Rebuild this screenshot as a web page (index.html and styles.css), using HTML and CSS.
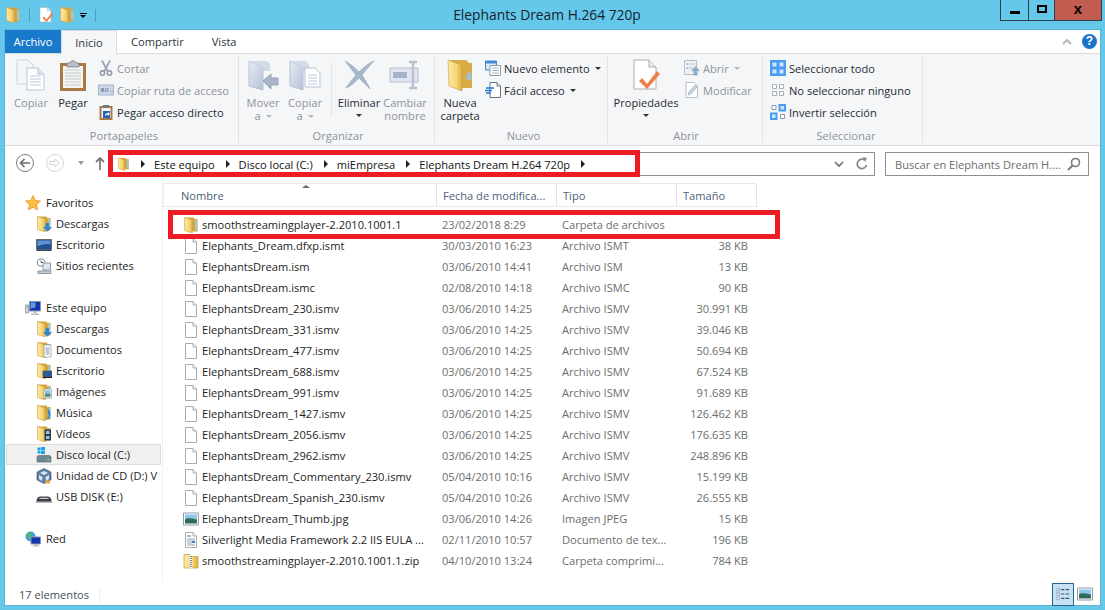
FILE: index.html
```html
<!DOCTYPE html>
<html lang="es">

<head>
    <meta charset="utf-8">
    <meta name="viewport" content="width=device-width, initial-scale=1.0">
    <title>Elephants Dream H.264 720p</title>
    <link rel="stylesheet" href="styles.css">
</head>

<body>
    <svg class="sprite" xmlns="http://www.w3.org/2000/svg">
        <defs>
            <linearGradient id="fold" x1="0" y1="0" x2="1" y2="0">
                <stop offset="0" stop-color="#fbeaa8" />
                <stop offset="0.6" stop-color="#f6d675" />
                <stop offset="1" stop-color="#dcae44" />
            </linearGradient>
            <linearGradient id="ghost" x1="0" y1="0" x2="1" y2="1">
                <stop offset="0" stop-color="#e6ecf6" />
                <stop offset="1" stop-color="#b4c1d8" />
            </linearGradient>
        </defs>
        <symbol id="folder" viewBox="0 0 16 16">
            <path d="M1.500 .5h9l1 1.500h3v12.500H9z" fill="#d2a540" />
            <path d="M1.500 .5l8 2.700V16l-8-2.500z" fill="url(#fold)" stroke="#cfa341" stroke-width=".6" />
            <path d="M12 3h2.500v10H12z" fill="#9ad0ee" opacity=".75" />
        </symbol>
        <symbol id="folder-dl" viewBox="0 0 16 16">
            <use href="#folder" />
            <path d="M9.500 7h3.500v4H16l-4.700 4.700L7 11h2.500z" fill="#2f86d4" />
        </symbol>
        <symbol id="folder-doc" viewBox="0 0 16 16">
            <use href="#folder" />
            <path d="M8 3h7v12H8z" fill="#fff" stroke="#8a97aa" stroke-width=".7" />
            <path d="M9.500 6h4M9.500 8h4M9.500 10h4M9.500 12h4" stroke="#8a97aa" />
        </symbol>
        <symbol id="folder-desk" viewBox="0 0 16 16">
            <use href="#folder" />
            <path d="M7 8h9v6H7z" fill="#2c5c98" stroke="#3c4a5c" stroke-width=".7" />
            <path d="M7 14.500h9" stroke="#222" />
        </symbol>
        <symbol id="folder-img" viewBox="0 0 16 16">
            <use href="#folder" />
            <path d="M8 5h7.500v9H8z" fill="#fff" stroke="#8a97aa" stroke-width=".7" />
            <path d="M9 6.200h5.500v3.300H9z" fill="#8fc3e6" />
            <path d="M9 9.500h5.500v3.300H9z" fill="#4e8a78" />
        </symbol>
        <symbol id="folder-music" viewBox="0 0 16 16">
            <use href="#folder" />
            <path d="M11.500 3c2.500 2 3.500 6 2.500 9-.5 2-3 3-4.500 2 1.500 0 3-1 3-3 0-3-1-5-1-8z" fill="#2f86d4" />
        </symbol>
        <symbol id="folder-video" viewBox="0 0 16 16">
            <use href="#folder" />
            <path d="M8.500 3.500h6.500v11H8.500z" fill="#2a3a4a" />
            <path d="M10 5h3.500v3H10zM10 10h3.500v3H10z" fill="#9ac2dd" />
        </symbol>
        <symbol id="doc" viewBox="0 0 16 16">
            <path d="M2.500 .5h7.500l3.500 3.500v11.500h-11z" fill="#fff" stroke="#a9acb1" />
            <path d="M10 .5v3.500h3.500" fill="#eef0f2" stroke="#a9acb1" />
        </symbol>
        <symbol id="doc-text" viewBox="0 0 16 16">
            <use href="#doc" />
            <path d="M4 4h4" stroke="#3d7cc4" />
            <path d="M4 7h8M4 9h8M4 11h5M4 13h8" stroke="#8ea3bb" />
            <path d="M9 9h3v2H9z" fill="#3d7cc4" />
        </symbol>
        <symbol id="zip" viewBox="0 0 16 16">
            <path d="M1 1.500h6l1.500 2H15v11.500H1z" fill="url(#fold)" stroke="#c99c3a" stroke-width=".7" />
            <path d="M8 2v13" stroke="#fff" stroke-width="2.400" />
            <path d="M7 3.500h2M7 5.500h2M7 7.500h2M7 9.500h2M7 11.500h2M7 13.500h2" stroke="#6d7f96" />
        </symbol>
        <symbol id="image" viewBox="0 0 16 16">
            <path d="M.5 2h15v12H.5z" fill="#fff" stroke="#8e9aa8" />
            <path d="M2 3.500h12v5H2z" fill="#8ec5e8" />
            <path d="M2 8.500c3-2 5-1 12 0v4H2z" fill="#2e6b5c" />
        </symbol>
        <symbol id="star" viewBox="0 0 16 16">
            <path d="M8 .5l2.300 5 5.200.5-4 3.600 1.200 5.400L8 12.200 3.300 15l1.200-5.400-4-3.600 5.200-.5z" fill="#fbbf45" stroke="#e58f2c" stroke-width=".8" />
        </symbol>
        <symbol id="desktop" viewBox="0 0 16 16">
            <path d="M.5 2.500h15v10H.5z" fill="#1f4f96" stroke="#5e6a78" />
            <path d="M1.500 3.500h13v4c-5-1-9 0-13 2z" fill="#5f94cf" />
            <path d="M.5 12.500h15v1.500H.5z" fill="#3f4a58" />
        </symbol>
        <symbol id="recent" viewBox="0 0 16 16">
            <circle cx="5" cy="4.500" r="3.800" fill="#fff" stroke="#7c8896" />
            <path d="M5 2.500v2h2" fill="none" stroke="#55606c" />
            <path d="M7 5h7.500v7H7z" fill="#dbe6f0" stroke="#8c99a7" />
            <path d="M2 13h13v2.500H2z" fill="#c4ccd4" stroke="#8c99a7" />
        </symbol>
        <symbol id="pc" viewBox="0 0 16 16">
            <path d="M.5 5h3v8h-3z" fill="#d8dcdf" stroke="#7d8791" stroke-width=".7" />
            <path d="M1.300 7h1.400" stroke="#3c9c46" />
            <path d="M4.500 1.500h11v9.500h-11z" fill="#1433b0" stroke="#8c97a3" />
            <path d="M5.500 2.500h5v5c-2 0-4 1-5 1.500z" fill="#5f9de0" />
            <path d="M8.500 11h3v2h-3zM6 13.500h8v1.500H6z" fill="#b4bbc3" />
        </symbol>
        <symbol id="drive-c" viewBox="0 0 16 16">
            <path d="M1 10.500C1 9 2 8.500 3 8.500h10c1 0 2 .5 2 2V15H1z" fill="#6d8795" stroke="#56646e" stroke-width=".6" />
            <path d="M11.500 12h2v1.300h-2z" fill="#8ee05d" />
            <path d="M1.500 .8l3-.5V3H1.500zM5 .2L9 0v3H5zM1.500 3.500h3v3h-3zM5 3.500h4V7H5z" fill="#19a3e8" />
        </symbol>
        <symbol id="drive-d" viewBox="0 0 16 16">
            <path d="M8 .5l7 3.500v8l-7 3.500-7-3.500V4z" fill="#5a7fa8" stroke="#3f5166" stroke-width=".6" />
            <path d="M4 5l4 2 4-2-4-2z" fill="#dfe6ee" />
            <path d="M3 7l3.500 2-.5 4L3 11zM13 7l-3.500 2 .5 4 3-2z" fill="#dfe6ee" />
            <path d="M9.500 12.500h4.500v3H9.500z" fill="#e9a73d" />
        </symbol>
        <symbol id="usb" viewBox="0 0 16 16">
            <path d="M.5 12c0-3 2-4.500 4-4.500h7c2 0 4 1.500 4 4.500v2H.5z" fill="#3e3f42" />
            <path d="M3 10c1-1 2-1.200 3-1.200h4c1 0 2 .2 3 1.200z" fill="#c8cbd0" />
            <path d="M.5 12.500h15v1.500H.5z" fill="#b9bcc2" />
        </symbol>
        <symbol id="net" viewBox="0 0 16 16">
            <circle cx="5.500" cy="5.500" r="5" fill="#3aa5e0" />
            <path d="M2 3l3-2 2 2-2 2 1 3-3-1zM8 6l2-1 1 2-2 2z" fill="#5fb84b" />
            <path d="M6 6h9.500v7H6z" fill="#1433b0" stroke="#8c97a3" />
            <path d="M9.500 13h3v1.500h-3zM8 14.500h6.500v1H8z" fill="#b4bbc3" />
        </symbol>
        <symbol id="copy-big" viewBox="0 0 32 32">
            <path d="M2 1h11l5 5v19H2z" fill="#f2f5fa" stroke="#c9d3e2" />
            <path d="M12 9h11l6 6v16H12z" fill="#fff" stroke="#b6c3d7" />
            <path d="M23 9v6h6" fill="#dfe6f1" stroke="#b6c3d7" />
            <path d="M15 17h11M15 20h11M15 23h11M15 26h11" stroke="#b6c7df" />
        </symbol>
        <symbol id="paste-big" viewBox="0 0 32 32">
            <path d="M3 4h26v28H3z" fill="#a97a45" />
            <path d="M6 7h20v22H6z" fill="#f5f6f2" />
            <path d="M8 11h16M8 14h16M8 17h16M8 20h16M8 23h16M8 26h16" stroke="#c3c8cc" />
            <path d="M10 4h3c0-3 6-3 6 0h3v4H10z" fill="#b9bec4" stroke="#737a82" stroke-width=".7" />
        </symbol>
        <symbol id="scissors" viewBox="0 0 16 16">
            <path d="M4 .5l5.500 10.500M12 .5L6.500 11" stroke="#9aa6b6" stroke-width="1.800" fill="none" />
            <circle cx="4.500" cy="13" r="2.200" fill="none" stroke="#8c99ab" stroke-width="1.400" />
            <circle cx="11.500" cy="13" r="2.200" fill="none" stroke="#8c99ab" stroke-width="1.400" />
        </symbol>
        <symbol id="copy-path" viewBox="0 0 16 16">
            <path d="M.5 3h15v10H.5z" fill="#cdd7e8" stroke="#a4b2c9" />
            <path d="M3 6l1 4 1-4 1 4M8 6l-.5 4M10 6l-.5 4" fill="none" stroke="#7d8ba1" />
            <path d="M12 9.500h.8M13.800 9.500h.8" stroke="#7d8ba1" />
        </symbol>
        <symbol id="paste-link" viewBox="0 0 16 16">
            <path d="M1.500 2h13v14h-13z" fill="#a97a45" />
            <path d="M3.500 4h9v10h-9z" fill="#f5f6f2" />
            <path d="M5 1h6v3H5z" fill="#6f7780" />
            <path d="M5 7h7v7H5z" fill="#1f62b6" />
            <path d="M7 12c0-2 1-3 3-3V8l2 2-2 2v-1.500c-1 0-2 .5-3 1.500z" fill="#fff" />
        </symbol>
        <symbol id="move-big" viewBox="0 0 32 32">
            <path d="M2 2l14 6v23L2 27z" fill="url(#ghost)" stroke="#b7c2d4" />
            <path d="M2 2h18l3 3v7H16V8z" fill="#d2dbe9" />
            <path d="M16 22l8-7v4h7v7h-7v4z" fill="#a9b6c9" stroke="#95a3b8" />
        </symbol>
        <symbol id="copyto-big" viewBox="0 0 32 32">
            <path d="M1 2l13 6v23L1 27z" fill="url(#ghost)" stroke="#b7c2d4" />
            <path d="M1 2h16l3 3v6h-6V8z" fill="#d2dbe9" />
            <path d="M16 9h10l5 5v14H16z" fill="#fff" stroke="#b6c3d7" />
            <path d="M19 16h9M19 19h9M19 22h9M19 25h9" stroke="#b6c7df" />
        </symbol>
        <symbol id="delete-big" viewBox="0 0 32 32">
            <path d="M2 2c6 3 10 7 14 11 4-4 8-8 15-11-5 5-9 10-12 14 3 5 6 9 8 14-4-4-8-8-11-11-4 4-8 8-13 10 3-5 7-9 10-13C9 11 6 7 2 2z" fill="#a7b7cc" stroke="#8fa1b8" stroke-width=".6" />
        </symbol>
        <symbol id="rename-big" viewBox="0 0 32 32">
            <path d="M1 9h28v14H1z" fill="#dfe6f0" stroke="#b4c0d0" />
            <path d="M4 13h14v6H4z" fill="#a4b3c8" />
            <path d="M20 3h8M20 29h8M24 3v26" fill="none" stroke="#b8c2cf" stroke-width="2.500" />
        </symbol>
        <symbol id="new-folder-big" viewBox="0 0 32 32">
            <path d="M4 1h18l3 3h3v25H14z" fill="#d8ad45" />
            <path d="M4 1l14 5v26L5 27z" fill="url(#fold)" stroke="#c99c3a" stroke-width=".6" />
            <path d="M23 14h4v7h-4z" fill="#8fc7ea" />
        </symbol>
        <symbol id="new-item" viewBox="0 0 16 16">
            <path d="M.5 1h11v9h-11z" fill="#d9e9fa" stroke="#3f88d8" />
            <path d="M.5 1h11v2.500h-11z" fill="#3f88d8" />
            <path d="M5 5.500h10.500v10H5z" fill="#fff" stroke="#8e9aa8" />
            <path d="M7 8h7M7 10.500h7M7 13h7" stroke="#a8b4c2" />
        </symbol>
        <symbol id="easy" viewBox="0 0 16 16">
            <path d="M5 .5h7l3.500 3.500v11.500H5z" fill="#fff" stroke="#6c7480" />
            <path d="M12 .5V4h3.500" fill="#eee" stroke="#6c7480" />
            <path d="M1 6h8M0 8.500h7M1 11h5" stroke="#1f79d6" stroke-width="1.300" />
        </symbol>
        <symbol id="props-big" viewBox="0 0 32 32">
            <path d="M4 1h15l7 7v22H4z" fill="#fff" stroke="#a9acb1" />
            <path d="M19 1v7h7" fill="#e9ecef" stroke="#a9acb1" />
            <path d="M12 19l5 6 10-13 3 3-13 15-8-8z" fill="#ee7f45" />
        </symbol>
        <symbol id="open" viewBox="0 0 16 16">
            <path d="M.5 .5h12v14H.5z" fill="#eef2f7" stroke="#b4becb" />
            <path d="M2.500 3h2v2h-2zM2.500 7h2v2h-2z" fill="#a9b8cc" />
            <path d="M6 4h5M6 8h3" stroke="#b4becb" />
            <path d="M11.500 6l4.500 5h-2.500v4.500h-4V11H7z" fill="#93abc9" />
        </symbol>
        <symbol id="edit" viewBox="0 0 16 16">
            <path d="M2 .5h8l3.500 3.500v11.500H2z" fill="#fff" stroke="#b4becb" />
            <path d="M4 13l1-3 6-7 2 2-6 7z" fill="#c7d5e6" stroke="#9fb0c6" stroke-width=".7" />
        </symbol>
        <symbol id="sel-all" viewBox="0 0 16 16">
            <path d="M0 0h16v16H0z" fill="#4a9cf2" />
            <path d="M2.500 2.500h4v4h-4zM9.500 2.500h4v4h-4zM2.500 9.500h4v4h-4zM9.500 9.500h4v4h-4z" fill="#cfe5fb" />
        </symbol>
        <symbol id="sel-none" viewBox="0 0 16 16">
            <path d="M2.500 2.500h4v4h-4zM9.500 2.500h4v4h-4zM2.500 9.500h4v4h-4zM9.500 9.500h4v4h-4z" fill="#fff" stroke="#a6adb6" />
        </symbol>
        <symbol id="sel-inv" viewBox="0 0 16 16">
            <path d="M2 1.500h4v4H2zM10.500 10.500h4v4h-4z" fill="#fff" stroke="#8f98a3" />
            <path d="M8.500 0H16v7.500H8.500zM0 8.500h7.500V16H0z" fill="#4a9cf2" />
            <path d="M10.500 2h3.500v3.500h-3.500zM2 10.500h3.500V14H2z" fill="#cfe5fb" />
        </symbol>
    </svg>

    <header class="titlebar">
        <div class="qat">
            <svg class="ico"><use href="#folder" /></svg>
            <span class="qat-sep"></span>
            <svg class="ico"><use href="#props-big" /></svg>
            <svg class="ico"><use href="#folder" /></svg>
            <span class="qat-drop"></span>
            <span class="qat-sep"></span>
        </div>
        <h1 class="wintitle">Elephants Dream H.264 720p</h1>
        <div class="winbtns">
            <button class="winbtn winbtn-min" type="button"><span></span></button>
            <button class="winbtn winbtn-max" type="button"><span></span></button>
            <button class="winbtn winbtn-close" type="button">x</button>
        </div>
    </header>

    <main class="window">
        <nav class="tabs">
            <span class="tab tab-file">Archivo</span>
            <span class="tab tab-active">Inicio</span>
            <span class="tab tab-share">Compartir</span>
            <span class="tab tab-view">Vista</span>
            <svg class="collapse" viewBox="0 0 10 6"><path d="M1 5l4-4 4 4" fill="none" stroke="#b4b8bd" stroke-width="2" /></svg>
            <span class="help">?</span>
        </nav>

        <section class="ribbon">
            <div class="group group-clip">
                <div class="group-body">
                    <div class="big off w42"><svg class="big-ico"><use href="#copy-big" /></svg><span>Copiar</span></div>
                    <div class="big w42"><svg class="big-ico"><use href="#paste-big" /></svg><span>Pegar</span></div>
                    <div class="smalls">
                        <div class="small off"><svg class="ico"><use href="#scissors" /></svg>Cortar</div>
                        <div class="small off"><svg class="ico"><use href="#copy-path" /></svg>Copiar ruta de acceso</div>
                        <div class="small"><svg class="ico"><use href="#paste-link" /></svg>Pegar acceso directo</div>
                    </div>
                </div>
                <div class="group-name">Portapapeles</div>
            </div>
            <div class="group group-org">
                <div class="group-body">
                    <div class="big off w42"><svg class="big-ico"><use href="#move-big" /></svg><span>Mover</span><span>a <i class="caret"></i></span></div>
                    <div class="big off w42"><svg class="big-ico"><use href="#copyto-big" /></svg><span>Copiar</span><span>a <i class="caret"></i></span></div>
                    <span class="inner-sep"></span>
                    <div class="big w46"><svg class="big-ico"><use href="#delete-big" /></svg><span>Eliminar</span><i class="caret caret-dark"></i></div>
                    <div class="big off w46"><svg class="big-ico"><use href="#rename-big" /></svg><span>Cambiar</span><span>nombre</span></div>
                </div>
                <div class="group-name">Organizar</div>
            </div>
            <div class="group group-new">
                <div class="group-body">
                    <div class="big w40"><svg class="big-ico"><use href="#new-folder-big" /></svg><span>Nueva</span><span>carpeta</span></div>
                    <div class="smalls">
                        <div class="small"><svg class="ico"><use href="#new-item" /></svg>Nuevo elemento <i class="caret caret-dark"></i></div>
                        <div class="small"><svg class="ico"><use href="#easy" /></svg>Fácil acceso <i class="caret caret-dark"></i></div>
                    </div>
                </div>
                <div class="group-name">Nuevo</div>
            </div>
            <div class="group group-open">
                <div class="group-body">
                    <div class="big w72"><svg class="big-ico"><use href="#props-big" /></svg><span>Propiedades</span><i class="caret caret-dark"></i></div>
                    <div class="smalls">
                        <div class="small off"><svg class="ico"><use href="#open" /></svg>Abrir <i class="caret"></i></div>
                        <div class="small off"><svg class="ico"><use href="#edit" /></svg>Modificar</div>
                    </div>
                </div>
                <div class="group-name">Abrir</div>
            </div>
            <div class="group group-sel">
                <div class="group-body">
                    <div class="smalls">
                        <div class="small"><svg class="ico"><use href="#sel-all" /></svg>Seleccionar todo</div>
                        <div class="small"><svg class="ico"><use href="#sel-none" /></svg>No seleccionar ninguno</div>
                        <div class="small"><svg class="ico"><use href="#sel-inv" /></svg>Invertir selección</div>
                    </div>
                </div>
                <div class="group-name">Seleccionar</div>
            </div>
        </section>

        <section class="navrow">
            <div class="navbtn navbtn-back"><svg viewBox="0 0 18 18"><circle cx="9" cy="9" r="8.500" fill="#fff" stroke="#7d7d7d" /><path d="M14 9H5M8.500 5L4.500 9l4 4" fill="none" stroke="#6a6a6a" stroke-width="1.600" /></svg></div>
            <div class="navbtn navbtn-fwd"><svg viewBox="0 0 18 18"><circle cx="9" cy="9" r="8.500" fill="#fff" stroke="#d5d5d5" /><path d="M4 7.500h5V5l4.500 4L9 13v-2.500H4z" fill="none" stroke="#d0d0d0" /></svg></div>
            <span class="navdrop"></span>
            <svg class="navup" viewBox="0 0 10 14"><path d="M5 14V2M1 6l4-4 4 4" fill="none" stroke="#7a7a7a" stroke-width="1.800" /></svg>
            <div class="address">
                <svg class="ico addr-ico"><use href="#folder" /></svg>
                <i class="crumb-arrow"></i>
                <span class="crumb">Este equipo</span>
                <i class="crumb-arrow"></i>
                <span class="crumb">Disco local (C:)</span>
                <i class="crumb-arrow"></i>
                <span class="crumb">miEmpresa</span>
                <i class="crumb-arrow"></i>
                <span class="crumb">Elephants Dream H.264 720p</span>
                <i class="crumb-arrow"></i>
                <svg class="addr-chev" viewBox="0 0 10 7"><path d="M1 1l4 4 4-4" fill="none" stroke="#6b6b6b" stroke-width="1.600" /></svg>
                <svg class="addr-refresh" viewBox="0 0 14 14"><path d="M11.500 8a4.700 4.700 0 1 1-2-5" fill="none" stroke="#8a8a8a" stroke-width="1.700" /><path d="M7.500 0l4.500 1-2 4z" fill="#8a8a8a" /></svg>
                <div class="mark mark-address"></div>
            </div>
            <div class="search">
                <span class="search-text">Buscar en Elephants Dream H....</span>
                <svg class="search-ico" viewBox="0 0 14 14"><circle cx="8.500" cy="5.500" r="4" fill="none" stroke="#7b7b7b" stroke-width="1.600" /><path d="M5.500 8.500L1 13" stroke="#7b7b7b" stroke-width="2" /></svg>
            </div>
        </section>

        <section class="content">
            <aside class="sidebar">
                <div class="tree tree-top"><svg class="ico"><use href="#star" /></svg>Favoritos</div>
                <div class="tree"><svg class="ico"><use href="#folder-dl" /></svg>Descargas</div>
                <div class="tree"><svg class="ico"><use href="#desktop" /></svg>Escritorio</div>
                <div class="tree"><svg class="ico"><use href="#recent" /></svg>Sitios recientes</div>
                <div class="tree-gap"></div>
                <div class="tree tree-top"><svg class="ico"><use href="#pc" /></svg>Este equipo</div>
                <div class="tree"><svg class="ico"><use href="#folder-dl" /></svg>Descargas</div>
                <div class="tree"><svg class="ico"><use href="#folder-doc" /></svg>Documentos</div>
                <div class="tree"><svg class="ico"><use href="#folder-desk" /></svg>Escritorio</div>
                <div class="tree"><svg class="ico"><use href="#folder-img" /></svg>Imágenes</div>
                <div class="tree"><svg class="ico"><use href="#folder-music" /></svg>Música</div>
                <div class="tree"><svg class="ico"><use href="#folder-video" /></svg>Vídeos</div>
                <div class="tree tree-sel"><svg class="ico"><use href="#drive-c" /></svg>Disco local (C:)</div>
                <div class="tree"><svg class="ico"><use href="#drive-d" /></svg>Unidad de CD (D:) V</div>
                <div class="tree"><svg class="ico"><use href="#usb" /></svg>USB DISK (E:)</div>
                <div class="tree-gap"></div>
                <div class="tree tree-top"><svg class="ico"><use href="#net" /></svg>Red</div>
            </aside>

            <div class="files">
                <div class="file-head">
                    <span class="col-head col-head-name">Nombre<i class="sort"></i></span>
                    <span class="col-head">Fecha de modifica...</span>
                    <span class="col-head">Tipo</span>
                    <span class="col-head">Tamaño</span>
                </div>
                <div class="file-rows">
                    <div class="mark mark-row"></div>
                    <div class="row"><span class="name"><svg class="ico"><use href="#folder" /></svg>smoothstreamingplayer-2.2010.1001.1</span><span>23/02/2018 8:29</span><span>Carpeta de archivos</span><span class="size"></span></div>
                    <div class="row"><span class="name"><svg class="ico"><use href="#doc" /></svg>Elephants_Dream.dfxp.ismt</span><span>30/03/2010 16:23</span><span>Archivo ISMT</span><span class="size">38 KB</span></div>
                    <div class="row"><span class="name"><svg class="ico"><use href="#doc" /></svg>ElephantsDream.ism</span><span>03/06/2010 14:41</span><span>Archivo ISM</span><span class="size">13 KB</span></div>
                    <div class="row"><span class="name"><svg class="ico"><use href="#doc" /></svg>ElephantsDream.ismc</span><span>02/08/2010 14:18</span><span>Archivo ISMC</span><span class="size">90 KB</span></div>
                    <div class="row"><span class="name"><svg class="ico"><use href="#doc" /></svg>ElephantsDream_230.ismv</span><span>03/06/2010 14:25</span><span>Archivo ISMV</span><span class="size">30.991 KB</span></div>
                    <div class="row"><span class="name"><svg class="ico"><use href="#doc" /></svg>ElephantsDream_331.ismv</span><span>03/06/2010 14:25</span><span>Archivo ISMV</span><span class="size">39.046 KB</span></div>
                    <div class="row"><span class="name"><svg class="ico"><use href="#doc" /></svg>ElephantsDream_477.ismv</span><span>03/06/2010 14:25</span><span>Archivo ISMV</span><span class="size">50.694 KB</span></div>
                    <div class="row"><span class="name"><svg class="ico"><use href="#doc" /></svg>ElephantsDream_688.ismv</span><span>03/06/2010 14:25</span><span>Archivo ISMV</span><span class="size">67.524 KB</span></div>
                    <div class="row"><span class="name"><svg class="ico"><use href="#doc" /></svg>ElephantsDream_991.ismv</span><span>03/06/2010 14:25</span><span>Archivo ISMV</span><span class="size">91.689 KB</span></div>
                    <div class="row"><span class="name"><svg class="ico"><use href="#doc" /></svg>ElephantsDream_1427.ismv</span><span>03/06/2010 14:25</span><span>Archivo ISMV</span><span class="size">126.462 KB</span></div>
                    <div class="row"><span class="name"><svg class="ico"><use href="#doc" /></svg>ElephantsDream_2056.ismv</span><span>03/06/2010 14:25</span><span>Archivo ISMV</span><span class="size">176.635 KB</span></div>
                    <div class="row"><span class="name"><svg class="ico"><use href="#doc" /></svg>ElephantsDream_2962.ismv</span><span>03/06/2010 14:25</span><span>Archivo ISMV</span><span class="size">248.896 KB</span></div>
                    <div class="row"><span class="name"><svg class="ico"><use href="#doc" /></svg>ElephantsDream_Commentary_230.ismv</span><span>05/04/2010 10:16</span><span>Archivo ISMV</span><span class="size">15.199 KB</span></div>
                    <div class="row"><span class="name"><svg class="ico"><use href="#doc" /></svg>ElephantsDream_Spanish_230.ismv</span><span>05/04/2010 10:26</span><span>Archivo ISMV</span><span class="size">26.555 KB</span></div>
                    <div class="row"><span class="name"><svg class="ico"><use href="#image" /></svg>ElephantsDream_Thumb.jpg</span><span>03/06/2010 14:26</span><span>Imagen JPEG</span><span class="size">15 KB</span></div>
                    <div class="row"><span class="name"><svg class="ico"><use href="#doc-text" /></svg>Silverlight Media Framework 2.2 IIS EULA ...</span><span>02/11/2010 10:57</span><span>Documento de tex...</span><span class="size">196 KB</span></div>
                    <div class="row"><span class="name"><svg class="ico"><use href="#zip" /></svg>smoothstreamingplayer-2.2010.1001.1.zip</span><span>04/10/2010 13:24</span><span>Carpeta comprimi...</span><span class="size">784 KB</span></div>
                </div>
            </div>
        </section>

        <footer class="status">
            <span class="status-count">17 elementos</span>
            <div class="views">
                <span class="view view-on">
                    <svg viewBox="0 0 16 16"><path d="M1 1.500h3v3H1zM1 6.500h3v3H1zM1 11.500h3v3H1z" fill="#eef" stroke="#7c8896" stroke-width=".7" /><path d="M6 3h3.500M11 3h4M6 8h3.500M11 8h4M6 13h3.500M11 13h4" stroke="#3d5166" stroke-width="1.200" /></svg>
                </span>
                <span class="view"><svg class="ico"><use href="#image" /></svg></span>
            </div>
        </footer>
    </main>
</body>

</html>
```

FILE: styles.css
```css
:root {
    --sky: #65c8ea;
    --line: #dadbdc;
    --off: #8e939b;
    --ink: #1f2a36;
    --red: #ed1c24;
}

*,
::before,
::after {
    box-sizing: border-box;
    padding: 0;
    margin: 0;
}

html,
body {
    height: 610px;
    overflow: hidden;
}

body {
    background: var(--sky);
    font-family: "Open Sans", "Noto Sans", sans-serif;
    font-size: 11.1px;
    color: #1c1c1c;
}

.sprite {
    position: absolute;
    width: 0;
    height: 0;
}

.ico {
    width: 16px;
    height: 16px;
    flex: none;
}

/* title bar */
.titlebar {
    height: 30px;
    display: grid;
    grid-template-columns: 1fr auto 1fr;
    align-items: start;
}

.qat {
    display: flex;
    align-items: center;
    height: 30px;
    padding-left: 5px;
    gap: 5px;
}

.qat-sep {
    width: 1px;
    height: 13px;
    margin: 0 3px;
    background: #4e9cb8;
}

.qat-drop {
    width: 7px;
    height: 5px;
    border-top: 1px solid #000;
    position: relative;
}

.qat-drop::after {
    content: "";
    position: absolute;
    top: 1px;
    left: 0;
    border: 3.5px solid transparent;
    border-top-color: #000;
    border-bottom: 0;
}

.wintitle {
    font-size: 13.8px;
    font-weight: 400;
    line-height: 30px;
    color: #16232b;
    margin-left: -11px;
}

.winbtns {
    justify-self: end;
    display: flex;
    height: 21px;
    margin-right: 3px;
    border: 1px solid #2f3d45;
    border-top: 0;
}

.winbtn {
    border: 0;
    background: none;
    display: flex;
    align-items: center;
    justify-content: center;
    font: 700 15px/1 "Liberation Sans", sans-serif;
    color: #000;
}

.winbtn-min {
    width: 28px;
    border-right: 1px solid #2f3d45;
}

.winbtn-min span {
    width: 10px;
    height: 3px;
    margin-top: 5px;
    background: #000;
}

.winbtn-max {
    width: 26px;
    border-right: 1px solid #2f3d45;
}

.winbtn-max span {
    width: 10px;
    height: 8px;
    margin-top: -2px;
    border: 2px solid #000;
}

.winbtn-close {
    width: 46px;
    padding-bottom: 4px;
    background: #c25b50;
}

/* window */
.window {
    width: 1095px;
    height: 575px;
    margin-left: 5px;
    background: #fff;
    display: flex;
    flex-direction: column;
    box-shadow: 0 0 0 1px #5ab4d4;
}

.tabs {
    height: 24px;
    flex: none;
    display: flex;
    align-items: stretch;
    border-bottom: 1px solid var(--line);
    color: #2b3440;
}

.tab {
    line-height: 23px;
}

.tab-file {
    width: 56px;
    text-align: center;
    background: #1979ca;
    color: #fff;
}

.tab-active {
    width: 56px;
    height: 24px;
    text-align: center;
    border: 1px solid var(--line);
    border-bottom: 0;
    background: #f5f6f7;
}

.tab-share {
    margin-left: 14px;
}

.tab-view {
    margin-left: 28px;
}

.collapse {
    width: 10px;
    height: 6px;
    margin: 9px 0 0 auto;
}

.help {
    width: 15px;
    height: 15px;
    margin: 4px 3px 0 10px;
    border-radius: 50%;
    background: #1a73c8;
    color: #fff;
    font: 700 12px/15px "Liberation Sans", sans-serif;
    text-align: center;
}

/* ribbon */
.ribbon {
    height: 92px;
    flex: none;
    display: flex;
    background: #f5f6f7;
    border-bottom: 1px solid var(--line);
}

.group {
    flex: none;
    height: 87px;
    margin-top: 2px;
    display: flex;
    flex-direction: column;
    border-right: 1px solid #e2e3e5;
}

.group-clip {
    width: 234px;
    padding-left: 5px;
}

.group-org {
    width: 196px;
    padding-left: 3px;
}

.group-new {
    width: 173px;
    padding-left: 5px;
}

.group-open {
    width: 155px;
    padding-left: 2px;
}

.group-sel {
    width: 160px;
    padding-left: 7px;
}

.group-body {
    flex: 1;
    display: flex;
    min-height: 0;
}

.group-name {
    height: 15px;
    line-height: 16px;
    text-align: center;
    color: var(--off);
}

.big {
    display: flex;
    flex-direction: column;
    align-items: center;
    padding-top: 3px;
    line-height: 13px;
    white-space: nowrap;
    color: var(--ink);
}

.big-ico {
    width: 32px;
    height: 32px;
    margin-bottom: 5px;
}

.w40 {
    width: 40px;
}

.w42 {
    width: 42px;
}

.w46 {
    width: 46px;
}

.w72 {
    width: 72px;
}

.big.off,
.small.off {
    color: var(--off);
}

.caret {
    display: inline-block;
    width: 0;
    height: 0;
    margin: 0 0 2px 2px;
    vertical-align: middle;
    border: 3px solid transparent;
    border-top-color: #b4b8bd;
    border-bottom: 0;
}

.caret-dark {
    border-top-color: #333;
}

.big > .caret-dark {
    margin: 5px 0 0;
}

.inner-sep {
    width: 1px;
    height: 54px;
    margin: 7px 4px 0 5px;
    background: #e2e3e5;
}

.smalls {
    display: flex;
    flex-direction: column;
    padding-top: 1px;
    margin-left: 4px;
}

.group-new .smalls {
    margin-left: 5px;
}

.group-open .smalls {
    margin-left: 2px;
}

.group-sel .smalls {
    margin-left: 0;
}

.small {
    height: 22px;
    display: flex;
    align-items: center;
    gap: 3px;
    white-space: nowrap;
    color: var(--ink);
}

.small .caret {
    margin: 0 0 0 2px;
}

/* address row */
.navrow {
    height: 32px;
    flex: none;
    display: flex;
    align-items: center;
    position: relative;
}

.navbtn {
    width: 18px;
    height: 18px;
    margin-top: 2px;
}

.navbtn svg {
    display: block;
}

.navbtn-back {
    margin-left: 11px;
}

.navbtn-fwd {
    margin-left: 12px;
}

.navdrop {
    margin: 2px 0 0 14px;
    border: 3.5px solid transparent;
    border-top: 4px solid #9a9a9a;
    border-bottom: 0;
}

.navup {
    width: 10px;
    height: 14px;
    margin: 2px 0 0 11px;
}

.address {
    position: relative;
    width: 767px;
    height: 24px;
    margin-left: 3px;
    margin-top: 4px;
    display: flex;
    align-items: center;
    padding-left: 9px;
    border: 1px solid #8e8e8e;
    color: #111;
}

.addr-ico {
    width: 13px;
    height: 16px;
    margin-left: -1px;
}

.crumb-arrow {
    width: 0;
    height: 0;
    margin: 0 9px 0 11px;
    border-left: 4px solid #222;
    border-top: 4px solid transparent;
    border-bottom: 4px solid transparent;
}

.crumb {
    white-space: nowrap;
}

.addr-chev {
    width: 10px;
    height: 7px;
    margin-left: auto;
}

.addr-refresh {
    width: 14px;
    height: 14px;
    margin: 0 5px 0 11px;
}

.mark {
    position: absolute;
    border: 5px solid var(--red);
    pointer-events: none;
}

.mark-address {
    top: -3px;
    left: -1px;
    width: 532px;
    height: 27px;
}

.search {
    width: 204px;
    height: 24px;
    margin: 4px 0 0 10px;
    display: flex;
    align-items: center;
    justify-content: space-between;
    padding: 0 7px 0 9px;
    border: 1px solid #8e8e8e;
    color: #6d6d6d;
}

.search-ico {
    width: 14px;
    height: 14px;
}

/* content */
.content {
    flex: 1;
    min-height: 0;
    display: flex;
    padding-bottom: 2px;
}

.sidebar {
    width: 158px;
    flex: none;
    padding: 14px 1px 0;
    border-right: 1px solid #f0f0f0;
    overflow: hidden;
}

.tree {
    height: 21px;
    display: flex;
    align-items: center;
    gap: 4px;
    padding-left: 30px;
    white-space: nowrap;
}

.tree-top {
    padding-left: 19px;
    gap: 5px;
}

.tree-sel {
    background: #f0f0f0;
    box-shadow: inset 0 0 0 1px #dcdcdc;
}

.tree-gap {
    height: 21px;
}

.files {
    flex: 1;
    padding-top: 5px;
}

.file-head {
    width: 593px;
    height: 24px;
    display: grid;
    grid-template-columns: 273px 120px 120px 80px;
    border-top: 1px solid #eaeaea;
    border-bottom: 1px solid #eaeaea;
    border-left: 1px solid #f0f0f0;
}

.col-head {
    position: relative;
    line-height: 23px;
    padding-left: 6px;
    color: #4c607a;
    border-right: 1px solid #e5e5e5;
}

.col-head-name {
    padding-left: 17px;
}

.sort {
    position: absolute;
    top: 1px;
    left: 138px;
    border: 4px solid transparent;
    border-bottom: 3px solid #5f6b78;
    border-top: 0;
}

.file-rows {
    position: relative;
    padding-top: 7px;
}

.mark-row {
    top: 3px;
    left: 5px;
    width: 612px;
    height: 29px;
}

.row {
    height: 21px;
    width: 593px;
    display: grid;
    grid-template-columns: 273px 120px 120px 80px;
    align-items: center;
    color: #6d6d6d;
    white-space: nowrap;
}

.row > span {
    padding-left: 6px;
}

.row > .name {
    display: flex;
    align-items: center;
    gap: 3px;
    padding-left: 20px;
    color: #1c1c1c;
}

.row > .size {
    padding: 0 8px 0 0;
    text-align: right;
}

/* status bar */
.status {
    height: 22px;
    flex: none;
    display: flex;
    align-items: center;
    justify-content: space-between;
    color: #44505c;
}

.status-count {
    height: 16px;
    line-height: 16px;
    margin-top: 2px;
    padding: 0 14px;
    border-right: 1px solid #eee;
    width: 95px;
    white-space: nowrap;
}

.views {
    display: flex;
    align-items: center;
    gap: 3px;
    margin-right: 7px;
}

.view {
    width: 16px;
    height: 16px;
}

.view svg {
    display: block;
}

.view-on {
    width: 22px;
    height: 23px;
    padding: 3px;
    background: #c4e1f5;
    border: 1px solid #2c628e;
}
```
